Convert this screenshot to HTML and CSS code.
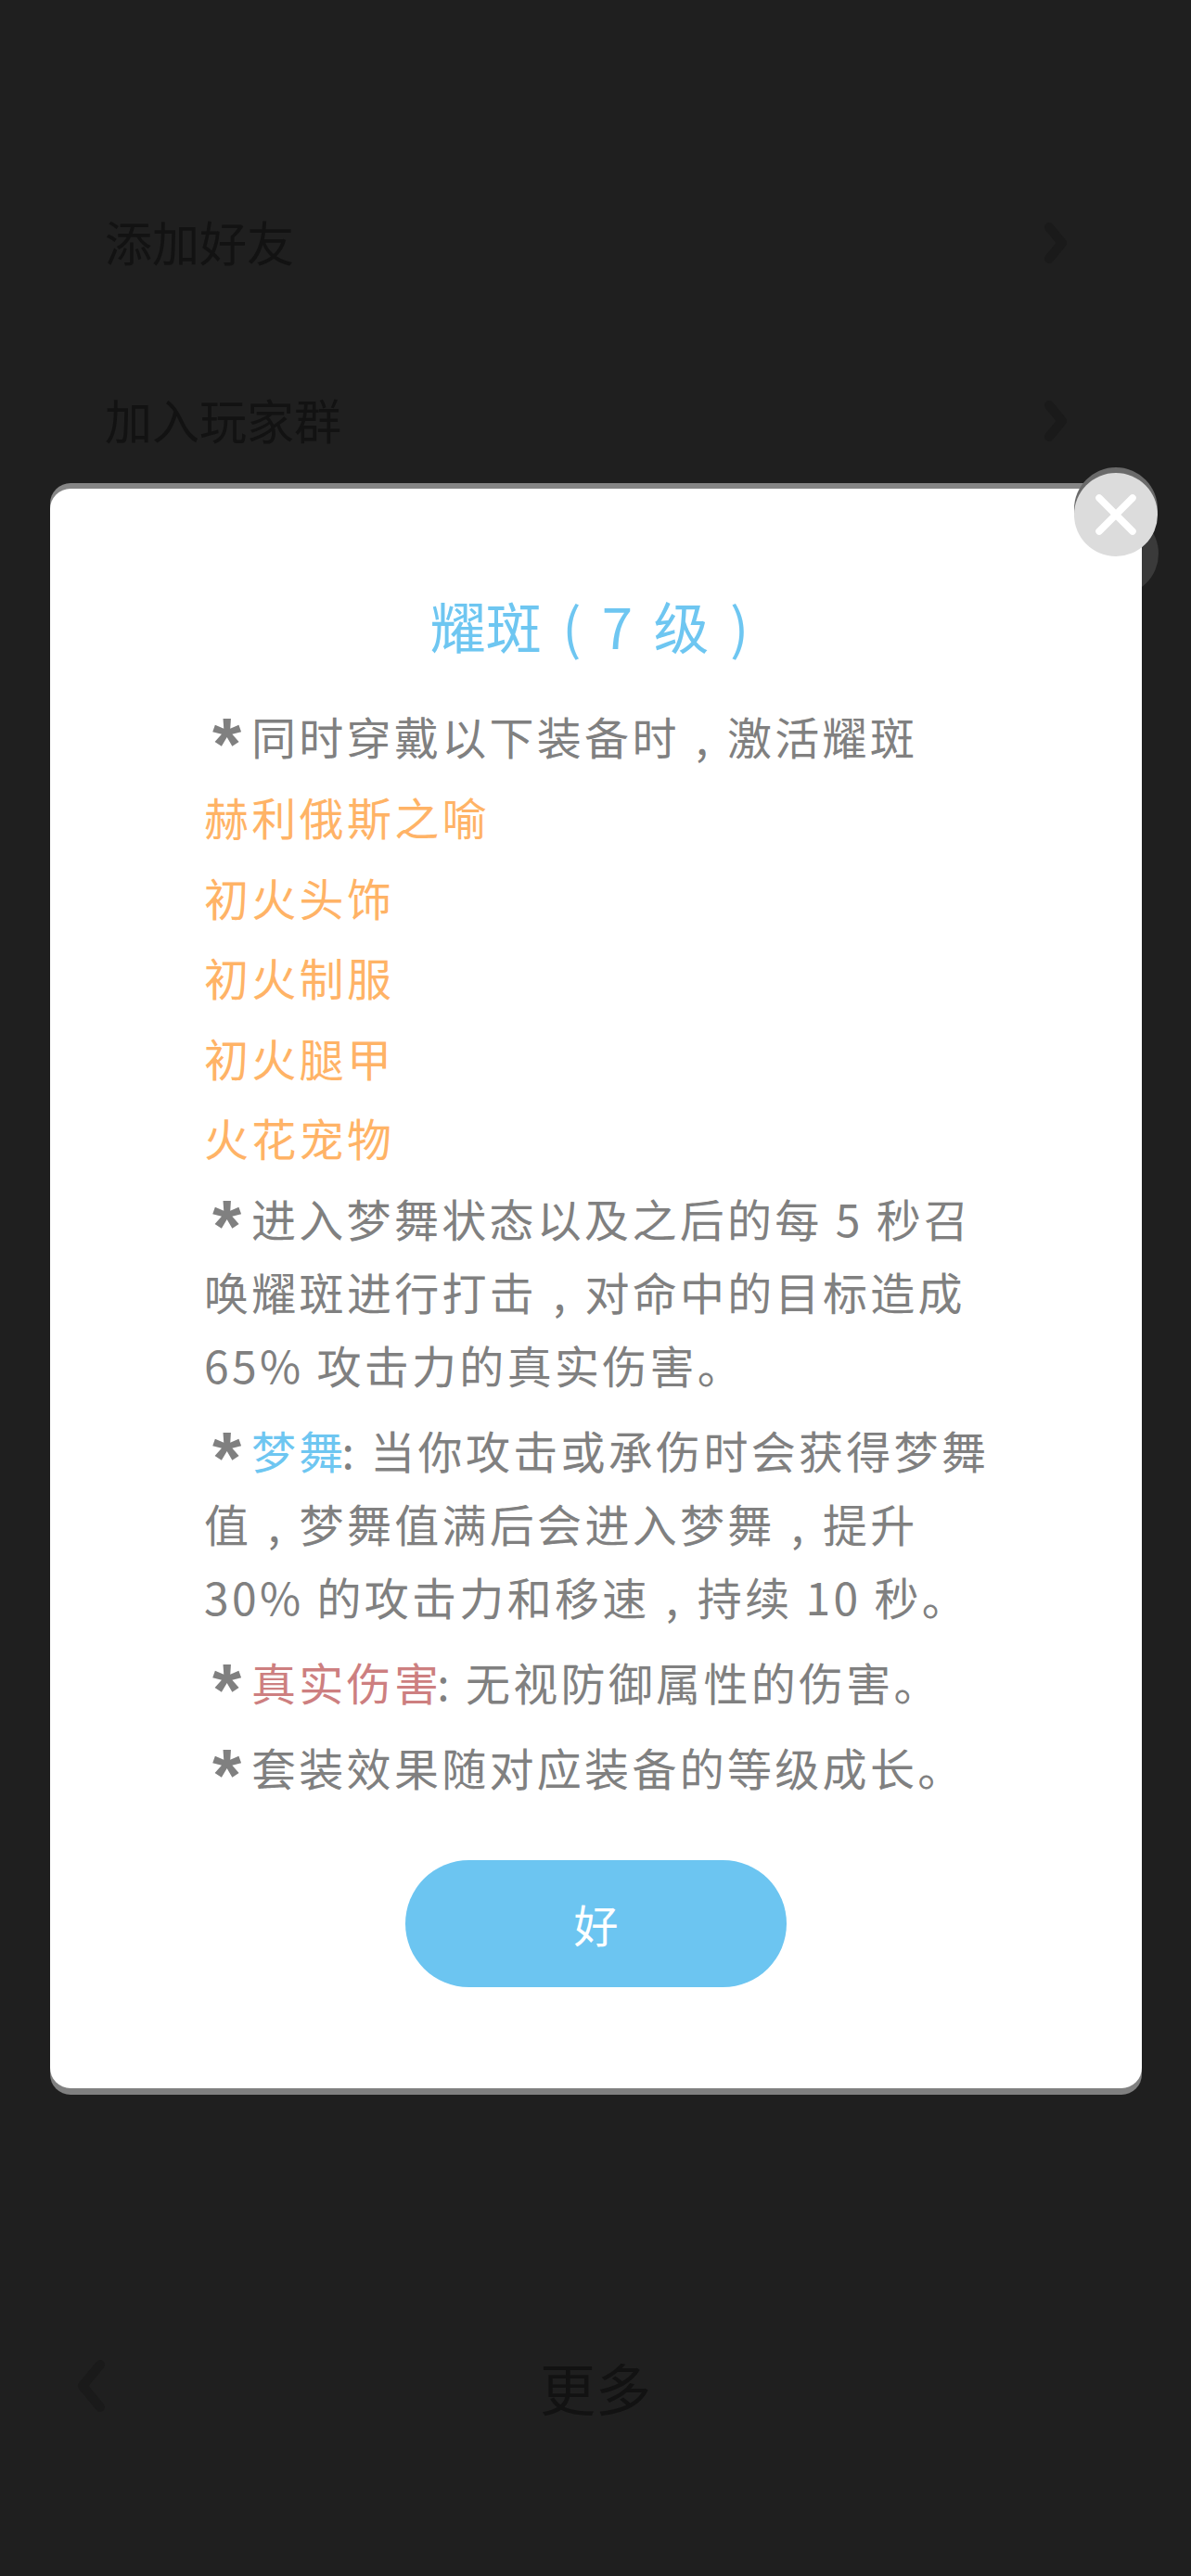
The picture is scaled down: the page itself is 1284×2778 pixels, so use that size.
FILE: index.html
```html
<!DOCTYPE html>
<html lang="zh-CN">
<head>
  <meta charset="UTF-8" />
  <meta name="viewport" content="width=device-width, initial-scale=1.0"/>
  <title>更多</title>
  <link rel="stylesheet" href="styles.css">
</head>
<body>

  <div class="page">
    <div class="menu">
      <div class="menu-row">
        <span>添加好友</span>
        <svg class="chevron" viewBox="0 0 24 44"><path d="M5 5 L19 22 L5 39"/></svg>
      </div>
      <div class="menu-row">
        <span>加入玩家群</span>
        <svg class="chevron" viewBox="0 0 24 44"><path d="M5 5 L19 22 L5 39"/></svg>
      </div>
    </div>

    <div class="footer">
      <svg class="back" viewBox="0 0 36 60"><path d="M29 7 L10 30 L29 53"/></svg>
      <span class="footer-title">更多</span>
    </div>
  </div>

  <div class="ghost-dot"></div>

  <div class="overlay">
    <div class="dialog">
      <button class="close" aria-label="关闭">
        <svg viewBox="0 0 44 44"><path d="M4 4 L40 40 M40 4 L4 40"/></svg>
      </button>

      <h2 class="title">耀斑 ( 7 级 )</h2>

      <div class="body">
        <p class="item-lead"><span class="star">*</span>同时穿戴以下装备时<span class="comma">,</span>激活耀斑</p>
        <p class="item">赫利俄斯之喻</p>
        <p class="item">初火头饰</p>
        <p class="item">初火制服</p>
        <p class="item">初火腿甲</p>
        <p class="item">火花宠物</p>
        <p class="para"><span class="star">*</span>进入梦舞状态以及之后的每 5 秒召唤耀斑进行打击<span class="comma">,</span>对命中的目标造成 65% 攻击力的真实伤害。</p>
        <p class="para"><span class="star">*</span><span class="blue">梦舞</span>: 当你攻击或承伤时会获得梦舞值<span class="comma">,</span>梦舞值满后会进入梦舞<span class="comma">,</span>提升 30% 的攻击力和移速<span class="comma">,</span>持续 10 秒。</p>
        <p class="para"><span class="star">*</span><span class="red">真实伤害</span>: 无视防御属性的伤害。</p>
        <p class="para"><span class="star">*</span>套装效果随对应装备的等级成长。</p>
      </div>

      <button class="ok">好</button>
    </div>
  </div>

</body>
</html>
```

FILE: styles.css
```css
* {
  box-sizing: border-box;
}

body {
  margin: 0;
  width: 1284px;
  height: 2778px;
  overflow: hidden;
  position: relative;
  background: #1f1f1f;
  font-family: "Noto Sans CJK SC", "Noto Sans", sans-serif;
}

.page {
  height: 100%;
  display: flex;
  flex-direction: column;
  justify-content: space-between;
}

.menu {
  padding: 164px 134px 0 113px;
}

.menu-row {
  height: 192px;
  display: flex;
  align-items: center;
  justify-content: space-between;
  font-size: 51px;
  color: #121212;
}

.chevron {
  width: 24px;
  height: 44px;
  margin-top: 4px;
}

.chevron path,
.back path {
  fill: none;
  stroke: #1a1a1a;
  stroke-width: 10;
  stroke-linecap: round;
  stroke-linejoin: round;
}

.footer {
  position: relative;
  height: 104px;
  margin-bottom: 153px;
  display: flex;
  align-items: center;
  justify-content: center;
}

.footer-title {
  font-size: 60px;
  color: #121212;
}

.back {
  position: absolute;
  left: 79px;
  top: 22px;
  width: 36px;
  height: 60px;
}

.ghost-dot {
  position: absolute;
  left: 1159px;
  top: 552px;
  width: 90px;
  height: 90px;
  border-radius: 50%;
  background: #3a3a3a;
}

.overlay {
  position: absolute;
  left: 0;
  top: 0;
  width: 100%;
  padding: 527px 53px 0 54px;
}

.dialog {
  position: relative;
  height: 1725px;
  padding: 106px 156px 0 166px;
  background: #fff;
  border-radius: 22px;
  box-shadow: 0 -6px 0 #858585, 0 7px 0 #808080;
}

.close {
  position: absolute;
  right: -17px;
  top: -17px;
  width: 90px;
  height: 90px;
  padding: 0;
  border: none;
  border-radius: 50%;
  background: #dcdcdc;
  box-shadow: 0 -6px 0 #6a6a6a;
  display: flex;
  align-items: center;
  justify-content: center;
}

.close svg {
  width: 44px;
  height: 44px;
}

.close path {
  fill: none;
  stroke: #fff;
  stroke-width: 7.5;
  stroke-linecap: round;
}

.title {
  margin: 0 0 39px;
  padding-right: 24px;
  text-align: center;
  font-size: 60px;
  line-height: 82px;
  font-weight: 400;
  word-spacing: 9px;
  color: #6ec6f1;
}

.body {
  font-size: 48px;
  line-height: 79px;
  letter-spacing: 3.3px;
  color: #808080;
}

.item-lead {
  margin: 0 0 8px;
}

.para {
  margin: 0 0 13px;
}

.item {
  margin: 0 0 7.5px;
  color: #ffb366;
}

.star {
  display: inline-block;
  width: 51px;
  padding-right: 2px;
  text-align: center;
  font-family: "Liberation Sans", sans-serif;
  font-size: 80px;
  font-weight: 700;
  line-height: 0;
  letter-spacing: 0;
  vertical-align: -16px;
}

.comma {
  display: inline-block;
  width: 51.3px;
  text-align: center;
}

.blue,
.red {
  margin-right: -5px;
}

.blue {
  color: #6ec6f1;
}

.red {
  color: #cd7f80;
}

.ok {
  display: block;
  width: 411px;
  height: 137px;
  margin: 61px 0 0 217px;
  border: none;
  border-radius: 69px;
  background: #6cc5f1;
  color: #fff;
  font-family: inherit;
  font-size: 48px;
}
```
